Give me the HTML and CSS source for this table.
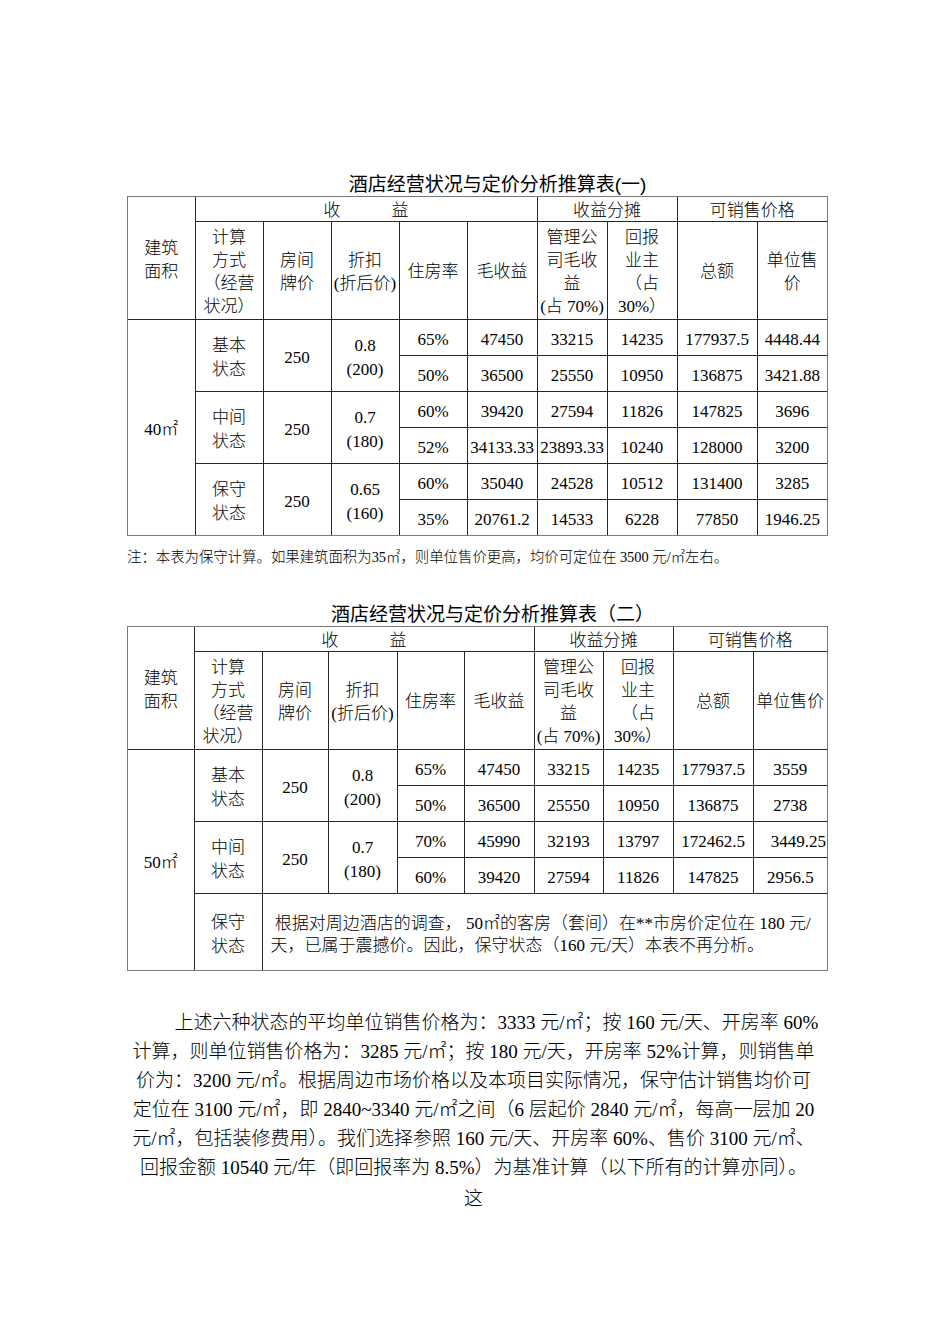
FILE: index.html
```html
<!DOCTYPE html>
<html lang="zh-CN">
<head>
<meta charset="utf-8">
<title>酒店经营状况与定价分析推算表</title>
<link rel="stylesheet" href="styles.css">
</head>
<body>
<div class="page">
  <h2 class="title t1-title">酒店经营状况与定价分析推算表(一)</h2>
  <div class="frame">
    <table class="grid">
      <colgroup>
        <col class="w67"><col class="w68"><col class="w68"><col class="w68"><col class="w68">
        <col class="w70"><col class="w70"><col class="w70"><col class="w80"><col class="w70">
      </colgroup>
      <tr class="r-h1">
        <td rowspan="2" class="hd">建筑<br>面积</td>
        <td colspan="5" class="hd">收　　　益</td>
        <td colspan="2" class="hd">收益分摊</td>
        <td colspan="2" class="hd">可销售价格</td>
      </tr>
      <tr class="r-h2">
        <td class="hd">计算<br>方式<br>（经营<br>状况）</td>
        <td class="hd">房间<br>牌价</td>
        <td class="hd">折扣<br>(折后价)</td>
        <td class="hd">住房率</td>
        <td class="hd">毛收益</td>
        <td class="hd">管理公<br>司毛收<br>益<br>(占 70%)</td>
        <td class="hd">回报<br>业主<br>（占<br>30%）</td>
        <td class="hd">总额</td>
        <td class="hd">单位售<br>价</td>
      </tr>
      <tr class="r-d">
        <td rowspan="6">40㎡</td>
        <td rowspan="2">基本<br>状态</td>
        <td rowspan="2">250</td>
        <td rowspan="2">0.8<br>(200)</td>
        <td>65%</td><td>47450</td><td>33215</td><td>14235</td><td>177937.5</td><td>4448.44</td>
      </tr>
      <tr class="r-d">
        <td>50%</td><td>36500</td><td>25550</td><td>10950</td><td>136875</td><td>3421.88</td>
      </tr>
      <tr class="r-d">
        <td rowspan="2">中间<br>状态</td>
        <td rowspan="2">250</td>
        <td rowspan="2">0.7<br>(180)</td>
        <td>60%</td><td>39420</td><td>27594</td><td>11826</td><td>147825</td><td>3696</td>
      </tr>
      <tr class="r-d">
        <td>52%</td><td>34133.33</td><td>23893.33</td><td>10240</td><td>128000</td><td>3200</td>
      </tr>
      <tr class="r-d">
        <td rowspan="2">保守<br>状态</td>
        <td rowspan="2">250</td>
        <td rowspan="2">0.65<br>(160)</td>
        <td>60%</td><td>35040</td><td>24528</td><td>10512</td><td>131400</td><td>3285</td>
      </tr>
      <tr class="r-d">
        <td>35%</td><td>20761.2</td><td>14533</td><td>6228</td><td>77850</td><td>1946.25</td>
      </tr>
    </table>
  </div>
  <p class="note">注：本表为保守计算。如果建筑面积为35㎡，则单位售价更高，均价可定位在 3500 元/㎡左右。</p>

  <h2 class="title t2-title">酒店经营状况与定价分析推算表（二）</h2>
  <div class="frame">
    <table class="grid">
      <colgroup>
        <col class="w66"><col class="w68"><col class="w66"><col class="w69"><col class="w67">
        <col class="w70"><col class="w69"><col class="w70"><col class="w80"><col class="w74">
      </colgroup>
      <tr class="r-h1">
        <td rowspan="2" class="hd">建筑<br>面积</td>
        <td colspan="5" class="hd">收　　　益</td>
        <td colspan="2" class="hd">收益分摊</td>
        <td colspan="2" class="hd">可销售价格</td>
      </tr>
      <tr class="r-h2">
        <td class="hd">计算<br>方式<br>（经营<br>状况）</td>
        <td class="hd">房间<br>牌价</td>
        <td class="hd">折扣<br>(折后价)</td>
        <td class="hd">住房率</td>
        <td class="hd">毛收益</td>
        <td class="hd">管理公<br>司毛收<br>益<br>(占 70%)</td>
        <td class="hd">回报<br>业主<br>（占<br>30%）</td>
        <td class="hd">总额</td>
        <td class="hd">单位售价</td>
      </tr>
      <tr class="r-d">
        <td rowspan="5">50㎡</td>
        <td rowspan="2">基本<br>状态</td>
        <td rowspan="2">250</td>
        <td rowspan="2">0.8<br>(200)</td>
        <td>65%</td><td>47450</td><td>33215</td><td>14235</td><td>177937.5</td><td>3559</td>
      </tr>
      <tr class="r-d">
        <td>50%</td><td>36500</td><td>25550</td><td>10950</td><td>136875</td><td>2738</td>
      </tr>
      <tr class="r-d">
        <td rowspan="2">中间<br>状态</td>
        <td rowspan="2">250</td>
        <td rowspan="2">0.7<br>(180)</td>
        <td>70%</td><td>45990</td><td>32193</td><td>13797</td><td>172462.5</td><td class="rt">3449.25</td>
      </tr>
      <tr class="r-d">
        <td>60%</td><td>39420</td><td>27594</td><td>11826</td><td>147825</td><td>2956.5</td>
      </tr>
      <tr class="r-last">
        <td>保守<br>状态</td>
        <td colspan="8" class="remark">&nbsp;根据对周边酒店的调查， 50㎡的客房（套间）在**市房价定位在 180 元/<br>天，已属于震撼价。因此，保守状态（160 元/天）本表不再分析。</td>
      </tr>
    </table>
  </div>

  <p class="body">上述六种状态的平均单位销售价格为：3333 元/㎡；按 160 元/天、开房率 60%<br>计算，则单位销售价格为：3285 元/㎡；按 180 元/天，开房率 52%计算，则销售单<br>价为：3200 元/㎡。根据周边市场价格以及本项目实际情况，保守估计销售均价可<br>定位在 3100 元/㎡，即 2840~3340 元/㎡之间（6 层起价 2840 元/㎡，每高一层加 20<br>元/㎡，包括装修费用）。我们选择参照 160 元/天、开房率 60%、售价 3100 元/㎡、<br>回报金额 10540 元/年（即回报率为 8.5%）为基准计算（以下所有的计算亦同）。</p>
  <p class="body tail">这</p>
</div>
</body>
</html>
```

FILE: styles.css
```css
html, body {
  margin: 0;
  padding: 0;
  background: #ffffff;
}

body {
  color: #000000;
  font-family: "Liberation Serif", "Noto Sans CJK SC", serif;
}

.page {
  width: 701px;
  margin-left: 127px;
  padding-top: 174px;
}

.title {
  margin: 0;
  font-family: "Liberation Sans", "Noto Sans CJK SC", sans-serif;
  font-weight: 400;
  font-size: 19px;
  line-height: 22px;
  text-align: center;
  white-space: nowrap;
}

.t1-title {
  padding-left: 40px;
}

.t2-title {
  margin-top: 37px;
  padding-left: 30px;
}

.frame {
  border: 1px solid #7a7a7a;
}

.grid {
  width: 699px;
  border-collapse: collapse;
  border-style: hidden;
  table-layout: fixed;
  font-size: 17px;
  font-weight: 300;
}

.grid td {
  border: 1px solid #262626;
  padding: 6px 1px 0;
  line-height: 24px;
  text-align: center;
  vertical-align: middle;
  white-space: nowrap;
  overflow: visible;
}

.grid td.hd {
  padding-top: 4px;
  line-height: 23.25px;
}

.grid .r-h1 td.hd {
  line-height: 19px;
}

.grid .r-h1 td.hd[rowspan] {
  line-height: 23px;
}

.r-h1 { height: 24px; }
.r-h2 { height: 95px; }
.r-d { height: 36px; }
.r-last { height: 77px; }

.grid td.rt {
  text-align: right;
  padding-right: 1px;
}

.grid td.remark {
  text-align: left;
  line-height: 22px;
  padding: 7px 4px 0 8px;
}

.w66 { width: 66px; }
.w67 { width: 67px; }
.w68 { width: 68px; }
.w69 { width: 69px; }
.w70 { width: 70px; }
.w74 { width: 74px; }
.w80 { width: 80px; }

.note {
  margin: 11px 0 0;
  font-size: 14.4px;
  line-height: 20px;
  font-weight: 300;
  white-space: nowrap;
}

.body {
  margin: 37px 0 0 -4px;
  width: 701px;
  font-size: 19px;
  line-height: 29px;
  font-weight: 300;
  text-align: center;
  text-indent: 46px;
  white-space: nowrap;
}

.body.tail {
  margin-top: 2px;
  text-indent: 0;
}
```
